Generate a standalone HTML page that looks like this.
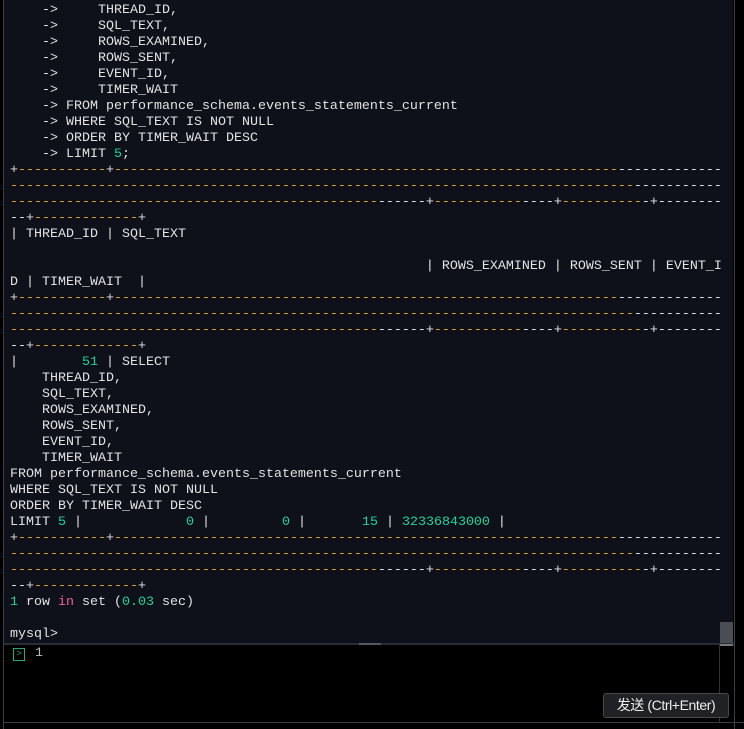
<!DOCTYPE html>
<html><head><meta charset="utf-8"><style>
html,body{margin:0;padding:0;width:744px;height:729px;overflow:hidden;background:#000;}
#term{position:absolute;left:4px;top:0;width:729px;height:644px;background:#0e1119;}
#lb{position:absolute;left:3px;top:0;width:1px;height:729px;background:#3a3d44;}
#rb{position:absolute;left:734px;top:0;width:1px;height:729px;background:#3a3d44;}
pre{position:absolute;left:10px;top:3px;margin:0;font-family:"Liberation Mono",monospace;font-size:13.33px;line-height:16px;color:#e2e2e2;white-space:pre;}
.o{color:#e3a12f}.g{color:#1fd49c}.p{color:#f0609a}
#sep{position:absolute;left:4px;top:643px;width:730px;height:2px;background:#2a2d33;}
#handle{position:absolute;left:359px;top:643px;width:22px;height:2px;background:#55585e;}
#thumb{position:absolute;left:720px;top:622px;width:13px;height:21px;background:#4a4d53;}
#thumb2{position:absolute;left:720px;top:644px;width:13px;height:2px;background:#777;}
#vl{position:absolute;left:719px;top:645px;width:1px;height:77px;background:#333;}
#bot{position:absolute;left:3px;top:722px;width:741px;height:1px;background:#3a3d44;}
#icon{position:absolute;left:13px;top:648px;width:10px;height:11px;border:1px solid #1fb070;color:#1fb070;font:9px "Liberation Mono",monospace;line-height:11px;text-align:center;}
#one{position:absolute;left:35px;top:646px;font:13.33px "Liberation Mono",monospace;color:#bbb;line-height:16px;}
#btn{position:absolute;left:603px;top:693px;width:124px;height:23px;background:#202124;border:1px solid #4a4a4a;border-radius:3px;color:#eee;font:14px "Liberation Sans","Noto Sans CJK SC",sans-serif;line-height:23px;text-align:center;letter-spacing:-0.4px;}
</style></head><body>
<div id="term"></div><div id="lb"></div><div id="rb"></div>
<pre>    -&gt;     THREAD_ID,
    -&gt;     SQL_TEXT,
    -&gt;     ROWS_EXAMINED,
    -&gt;     ROWS_SENT,
    -&gt;     EVENT_ID,
    -&gt;     TIMER_WAIT
    -&gt; FROM performance_schema.events_statements_current
    -&gt; WHERE SQL_TEXT IS NOT NULL
    -&gt; ORDER BY TIMER_WAIT DESC
    -&gt; LIMIT <span class="g">5</span>;
+<span class="o">-----------</span>+<span class="o">---------------------------------------------------------------</span>-------------
<span class="o">------------------------------------------------------------------------------</span>-----------
<span class="o">----------------------------------------------</span>------+<span class="o">-----------</span>----+<span class="o">----------</span>-+--------
--+<span class="o">-------------</span>+
| THREAD_ID | SQL_TEXT

                                                    | ROWS_EXAMINED | ROWS_SENT | EVENT_I
D | TIMER_WAIT  |
+<span class="o">-----------</span>+<span class="o">---------------------------------------------------------------</span>-------------
<span class="o">------------------------------------------------------------------------------</span>-----------
<span class="o">----------------------------------------------</span>------+<span class="o">-----------</span>----+<span class="o">----------</span>-+--------
--+<span class="o">-------------</span>+
|        <span class="g">51</span> | SELECT
    THREAD_ID,
    SQL_TEXT,
    ROWS_EXAMINED,
    ROWS_SENT,
    EVENT_ID,
    TIMER_WAIT
FROM performance_schema.events_statements_current
WHERE SQL_TEXT IS NOT NULL
ORDER BY TIMER_WAIT DESC
LIMIT <span class="g">5</span> |             <span class="g">0</span> |         <span class="g">0</span> |       <span class="g">15</span> | <span class="g">32336843000</span> |
+<span class="o">-----------</span>+<span class="o">---------------------------------------------------------------</span>-------------
<span class="o">------------------------------------------------------------------------------</span>-----------
<span class="o">----------------------------------------------</span>------+<span class="o">-----------</span>----+<span class="o">----------</span>-+--------
--+<span class="o">-------------</span>+
<span class="g">1</span> row <span class="p">in</span> set (<span class="g">0.03</span> sec)

mysql&gt;</pre>
<div id="thumb"></div>
<div id="sep"></div><div id="handle"></div><div id="thumb2"></div>
<div id="vl"></div><div id="bot"></div>
<div id="icon">&gt;</div>
<div id="one">1</div>
<div id="btn">发送 (Ctrl+Enter)</div>
</body></html>
